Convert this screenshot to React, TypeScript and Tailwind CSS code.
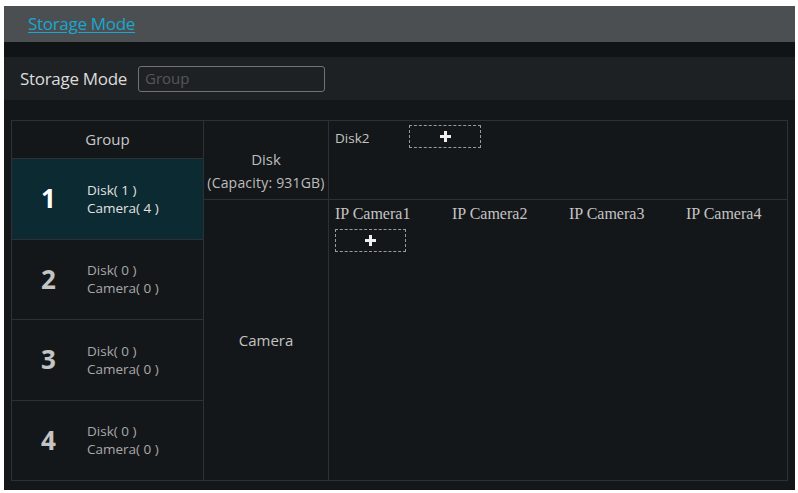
import React from "react";

const groups = [
  { id: 1, disk: 1, camera: 4 },
  { id: 2, disk: 0, camera: 0 },
  { id: 3, disk: 0, camera: 0 },
  { id: 4, disk: 0, camera: 0 },
];

const cameras = ["IP Camera1", "IP Camera2", "IP Camera3", "IP Camera4"];

const AddButton: React.FC<{ className?: string }> = ({ className }) => (
  <div
    className={`flex items-center justify-center border border-dashed border-[#9a9a9a] ${className ?? ""}`}
  >
    <span className="relative block w-[11px] h-[11px]">
      <span className="absolute left-[4px] top-0 w-[3px] h-[11px] bg-[#eeeeee]" />
      <span className="absolute left-0 top-[4px] w-[11px] h-[3px] bg-[#eeeeee]" />
    </span>
  </div>
);

const App: React.FC = () => {
  return (
    <div
      className="w-[798px] h-[493px] bg-white pt-[6px] pl-[4px] pr-[3px] pb-[3px]"
      style={{ fontFamily: '"Open Sans", "Noto Sans", sans-serif' }}
    >
      <div className="h-full flex flex-col bg-[#141719]">
        {/* Title bar */}
        <div className="h-[36px] bg-[#4b4f52] flex items-center px-[24px]">
          <span className="text-[17px] text-[#1ba6cf] underline underline-offset-2 tracking-[-0.3px]">
            Storage Mode
          </span>
        </div>
        <div className="h-[15px] bg-[#111417]" />

        {/* Storage mode row */}
        <div className="h-[43px] bg-[#1e2124] flex items-center px-[16px] gap-[11px]">
          <span className="text-[17px] text-[#dcdcdc] tracking-[-0.3px]">Storage Mode</span>
          <div className="w-[187px] h-[26px] border border-[#707274] rounded-[3px] flex items-center px-[6px]">
            <span className="text-[15px] text-[#555759]">Group</span>
          </div>
        </div>

        {/* Table */}
        <div className="flex-1 px-[7px] pt-[20px] pb-[9px]">
          <div className="h-full grid grid-cols-[192px_125px_1fr] grid-rows-[79px_1fr] border-t border-l border-[#2d3034]">
            {/* Group column */}
            <div className="row-span-2 flex flex-col border-r border-b border-[#2d3034]">
              <div className="h-[38px] flex items-center justify-center border-b border-[#2d3034] text-[15px] text-[#c9c9c9]">
                Group
              </div>
              {groups.map((g, i) => (
                <div
                  key={g.id}
                  className={`flex-1 flex items-center pl-[29px] gap-[26px] ${
                    i < groups.length - 1 ? "border-b border-[#2d3034]" : ""
                  } ${g.id === 1 ? "bg-[#0c2a32]" : ""}`}
                >
                  <span
                    className={`text-[26px] font-bold w-[20px] ${
                      g.id === 1 ? "text-white" : "text-[#c4c4c4]"
                    }`}
                  >
                    {g.id}
                  </span>
                  <div
                    className={`flex flex-col text-[13.5px] leading-[18px] ${
                      g.id === 1 ? "text-[#e2e2e2]" : "text-[#a9a9a9]"
                    }`}
                  >
                    <span>Disk( {g.disk} )</span>
                    <span>Camera( {g.camera} )</span>
                  </div>
                </div>
              ))}
            </div>

            {/* Disk label */}
            <div className="flex flex-col items-center justify-center pt-[22px] border-r border-b border-[#2d3034] text-[#bdbdbd]">
              <span className="text-[15px] leading-[24px]">Disk</span>
              <span className="text-[14px] leading-[24px] tracking-[0.2px] whitespace-nowrap">(Capacity: 931GB)</span>
            </div>

            {/* Disk content */}
            <div className="border-r border-b border-[#2d3034] flex items-start gap-[40px] pl-[6px] pt-[4px]">
              <span className="text-[13.5px] text-[#c4c4c4] mt-[3px]">Disk2</span>
              <AddButton className="w-[72px] h-[23px]" />
            </div>

            {/* Camera label */}
            <div className="flex items-center justify-center border-r border-b border-[#2d3034] text-[15px] text-[#c4c4c4]">
              Camera
            </div>

            {/* Camera content */}
            <div className="border-r border-b border-[#2d3034] pl-[6px] pt-[2px]">
              <div
                className="flex text-[16px] text-[#c4c4c4]"
                style={{ fontFamily: '"Liberation Serif", "DejaVu Serif", serif' }}
              >
                {cameras.map((c, i) => (
                  <span key={c} className={i < 3 ? "w-[117px]" : ""}>
                    {c}
                  </span>
                ))}
              </div>
              <AddButton className="w-[71px] h-[23px] mt-[3px]" />
            </div>
          </div>
        </div>
      </div>
    </div>
  );
};

export default App;
